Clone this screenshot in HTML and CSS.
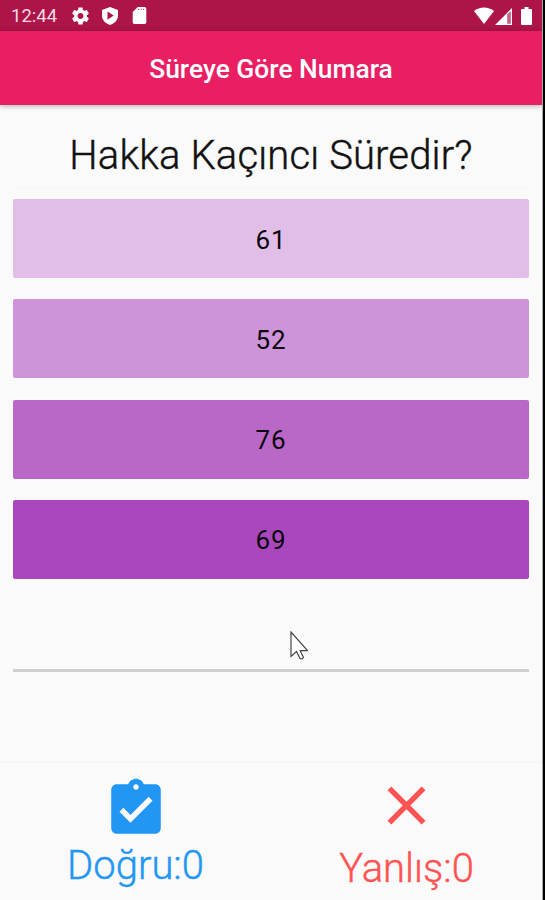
FILE: index.html
```html
<!DOCTYPE html>
<html lang="tr">

<head>
  <meta charset="UTF-8">
  <meta name="viewport" content="width=device-width, initial-scale=1.0">
  <title>Süreye Göre Numara</title>
  <link rel="stylesheet" href="styles.css">
</head>

<body>
  <div class="phone">
    <div class="status-bar">
      <span class="clock">12:44</span>
      <svg class="icon-gear" viewBox="2 2 20 20">
        <path d="M19.43 12.98c.04-.32.07-.64.07-.98s-.03-.66-.07-.98l2.11-1.65c.19-.15.24-.42.12-.64l-2-3.46c-.12-.22-.39-.3-.61-.22l-2.49 1c-.52-.4-1.08-.73-1.69-.98l-.38-2.65C14.46 2.18 14.25 2 14 2h-4c-.25 0-.46.18-.49.42l-.38 2.65c-.61.25-1.17.59-1.69.98l-2.49-1c-.23-.09-.49 0-.61.22l-2 3.46c-.13.22-.07.49.12.64l2.11 1.65c-.04.32-.07.65-.07.98s.03.66.07.98l-2.11 1.65c-.19.15-.24.42-.12.64l2 3.46c.12.22.39.3.61.22l2.49-1c.52.4 1.08.73 1.69.98l.38 2.65c.03.24.24.42.49.42h4c.25 0 .46-.18.49-.42l.38-2.65c.61-.25 1.17-.59 1.69-.98l2.49 1c.23.09.49 0 .61-.22l2-3.46c.12-.22.07-.49-.12-.64l-2.11-1.65zM12 15.5c-1.93 0-3.5-1.57-3.5-3.5s1.57-3.5 3.5-3.5 3.5 1.57 3.5 3.5-1.57 3.5-3.5 3.5z"/>
      </svg>
      <svg class="icon-shield" viewBox="0 0 16 18">
        <path fill-rule="evenodd" d="M8 0l8 3v5.500c0 4.500-3.400 8-8 9.500c-4.600-1.500-8-5-8-9.500V3zM5.500 4.500v8.200l6.200-4.100z"/>
      </svg>
      <svg class="icon-card" viewBox="4 2 16 20">
        <path d="M18 2h-8L4.020 8 4 20c0 1.100.9 2 2 2h12c1.100 0 2-.9 2-2V4c0-1.100-.9-2-2-2zM11.500 5.500h-1V4h1zm3 0h-1V4h1zm3 0h-1V4h1z"/>
      </svg>
      <div class="status-right">
        <svg class="icon-wifi" viewBox="0 0 20 17">
          <path d="M0 4C5.500-.8 14.500-.8 20 4L10 17z"/>
        </svg>
        <svg class="icon-signal" viewBox="0 0 17 17">
          <path fill-rule="evenodd" d="M17 0v17H0zM12.500 6.500v9h3V3.500z"/>
          <path class="signal-dim" d="M12.500 6.500v9h3V3.500z"/>
        </svg>
        <svg class="icon-battery" viewBox="0 0 11 18">
          <path d="M3.500 0h4v2H10q1 0 1 1v14q0 1-1 1H1q-1 0-1-1V3q0-1 1-1h2.500z"/>
        </svg>
      </div>
    </div>

    <header class="app-bar">
      <h1>Süreye Göre Numara</h1>
    </header>

    <main class="quiz">
      <h2 class="question">Hakka Kaçıncı Süredir?</h2>
      <div class="answers">
        <button class="answer answer-a" type="button">61</button>
        <button class="answer answer-b" type="button">52</button>
        <button class="answer answer-c" type="button">76</button>
        <button class="answer answer-d" type="button">69</button>
      </div>
      <div class="progress">
        <svg class="cursor" viewBox="0 0 18 29">
          <path d="M1 1v24.500l5.500-5 3.500 7q2 1 3.500-1l-3.300-6.800H17.500z"/>
        </svg>
      </div>
    </main>

    <footer class="score">
      <div class="score-item correct">
        <svg class="icon-correct" viewBox="0 0 24 24">
          <path d="M19 3h-4.180C14.400 1.840 13.300 1 12 1c-1.300 0-2.400.84-2.820 2H5c-1.100 0-2 .9-2 2v14c0 1.100.9 2 2 2h14c1.100 0 2-.9 2-2V5c0-1.100-.9-2-2-2zm-7 0c.55 0 1 .45 1 1s-.45 1-1 1-1-.45-1-1 .45-1 1-1zm-2 14l-4-4 1.410-1.410L10 14.170l6.590-6.590L18 9l-8 8z"/>
        </svg>
        <span>Doğru:0</span>
      </div>
      <div class="score-item wrong">
        <svg class="icon-wrong" viewBox="0 0 24 24">
          <path d="M19 6.410L17.590 5 12 10.590 6.410 5 5 6.410 10.590 12 5 17.590 6.410 19 12 13.410 17.590 19 19 17.590 13.410 12z"/>
        </svg>
        <span>Yanlış:0</span>
      </div>
    </footer>
  </div>
</body>

</html>
```
FILE: styles.css
```css
* {
  box-sizing: border-box;
}

body {
  margin: 0;
  background-color: #000;
  font-family: Roboto, "Liberation Sans", sans-serif;
}

svg {
  display: block;
  flex: none;
}

.phone {
  display: flex;
  flex-direction: column;
  width: 543px;
  height: 900px;
  background-color: #fafafa;
  border-right: 1px solid #aaa;
  overflow: hidden;
}

.status-bar {
  display: flex;
  align-items: center;
  flex: none;
  height: 31px;
  padding: 0 10px 0 11px;
  background-color: #ad1448;
  fill: #fff;
}

.clock {
  width: 61px;
  color: #f9dce6;
  font-size: 18.5px;
  line-height: 31px;
  padding-top: 2px;
}

.icon-gear {
  width: 17px;
  height: 18px;
}

.icon-shield {
  width: 16px;
  height: 18px;
  margin-left: 13px;
}

.icon-card {
  width: 15px;
  height: 17px;
  margin-left: 14px;
}

.status-right {
  display: flex;
  align-items: center;
  margin-left: auto;
}

.icon-wifi {
  width: 20px;
  height: 17px;
}

.icon-signal {
  width: 17px;
  height: 17px;
  margin: 1px 9px 0 1px;
}

.signal-dim {
  fill: #c9648a;
}

.icon-battery {
  width: 11px;
  height: 18px;
}

.app-bar {
  flex: none;
  height: 73.5px;
  background-color: #e91e63;
  box-shadow: 0 1px 5px rgba(0, 0, 0, 0.3);
  text-align: center;
}

.app-bar h1 {
  margin: 0;
  color: #fff;
  font-size: 26.4px;
  font-weight: 500;
  line-height: 76px;
}

.quiz {
  flex: 1;
  padding: 0 13px;
}

.question {
  height: 84px;
  margin: 0;
  border-bottom: 1px solid #f5f5f5;
  color: #111;
  font-size: 40px;
  font-weight: 300;
  letter-spacing: 0.15px;
  line-height: 102px;
  text-align: center;
  white-space: nowrap;
  -webkit-text-stroke: 0.4px;
}

.answers {
  display: grid;
  gap: 21.3px;
  padding-top: 10.5px;
}

.answer {
  height: 79px;
  padding: 2px 0 0;
  border: none;
  border-radius: 2px;
  color: #0c0610;
  font-family: inherit;
  font-size: 26px;
  letter-spacing: 0.8px;
}

.answer-a {
  background-color: #e1bee7;
}

.answer-b {
  background-color: #ce93d8;
}

.answer-c {
  background-color: #ba68c8;
}

.answer-d {
  background-color: #ab47bc;
}

.progress {
  position: relative;
  height: 93px;
  border-bottom: 3px solid #d0d0d0;
}

.cursor {
  position: absolute;
  top: 52px;
  left: 277px;
  width: 18px;
  height: 29px;
  fill: #fff;
  stroke: #444;
  stroke-width: 1.2;
}

.score {
  display: flex;
  flex: none;
  height: 138px;
  border-top: 1px solid #f3f3f3;
  font-size: 40px;
  font-weight: 300;
  -webkit-text-stroke: 0.4px;
}

.score-item {
  display: flex;
  flex: 1;
  flex-direction: column;
  align-items: center;
  line-height: 48px;
}

.correct {
  padding-top: 13px;
  color: #2196f3;
  fill: #2196f3;
}

.wrong {
  padding-top: 10px;
  color: #ff5252;
  fill: #ff5252;
}

.icon-correct {
  width: 66px;
  height: 66px;
}

.icon-wrong {
  width: 65px;
  height: 65px;
  margin-bottom: 7px;
}
```
